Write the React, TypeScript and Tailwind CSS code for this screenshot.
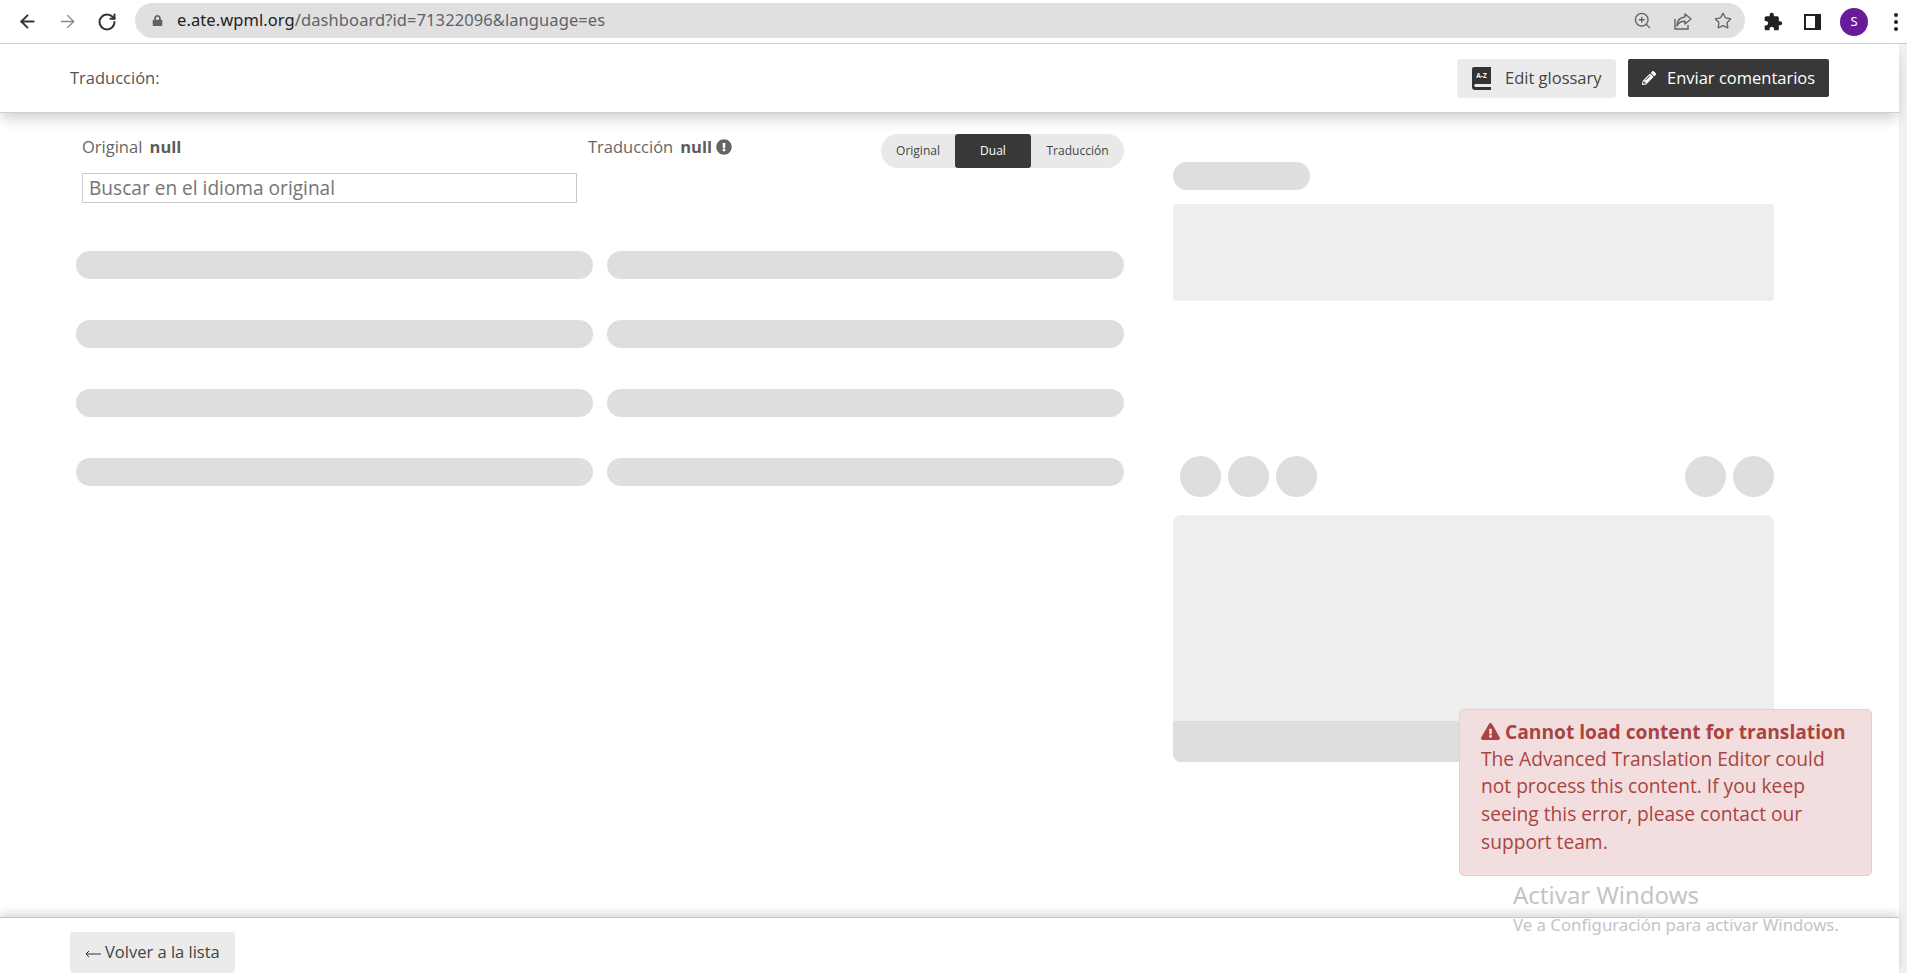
import React from 'react'
import { ArrowLeft, ArrowRight, RotateCw, ZoomIn, Star } from 'lucide-react'
import { FaPencilAlt, FaExclamationCircle, FaExclamationTriangle, FaLock } from 'react-icons/fa'

const rows = [0, 1, 2, 3]

const BrowserBar = () => (
  <div className="h-[44px] shrink-0 flex items-center border-b border-[#cfcfcf] bg-white font-['Noto_Sans',sans-serif]">
    <div className="w-[135px] shrink-0 flex items-center pl-[17px] gap-[19px] text-[#333]">
      <ArrowLeft size={21} strokeWidth={2.2} />
      <ArrowRight size={21} strokeWidth={1.6} className="text-[#8a8a8a]" />
      <RotateCw size={20} strokeWidth={2.4} />
    </div>
    <div className="w-[1610px] h-[35px] mb-[2px] shrink-0 rounded-full bg-[#e0e0e0] flex items-center pl-[17px] pr-[13px]">
      <FaLock size={11} className="text-[#5f6368]" />
      <div className="ml-[14px] flex-1 text-[16.500px] tracking-[0.08px] text-[#5f6368]">
        <span className="text-[#202124]">e.ate.wpml.org</span>/dashboard?id=71322096&amp;language=es
      </div>
      <div className="flex items-center gap-[21px] text-[#5f6368]">
        <ZoomIn size={19} strokeWidth={1.7} />
        <svg width="20" height="18" viewBox="0 0 20 18" fill="none" stroke="currentColor" strokeWidth="1.4">
          <path d="M2 7v10h13v-4" />
          <path d="M12 2l6 5-6 5V9.200C8 9 5.500 10.500 4 14c0-5 3-8.500 8-9z" strokeLinejoin="round" />
        </svg>
        <Star size={18} strokeWidth={1.8} />
      </div>
    </div>
    <div className="flex-1 flex items-center pl-[18px] text-[#202124]">
      <svg width="20" height="20" viewBox="0 0 24 24" fill="currentColor">
        <path d="M20.500 11H19V7c0-1.100-.9-2-2-2h-4V3.500C13 2.120 11.880 1 10.500 1S8 2.120 8 3.500V5H4c-1.100 0-1.990.9-1.990 2v3.800H3.500c1.490 0 2.700 1.210 2.700 2.700s-1.210 2.700-2.700 2.700H2V20c0 1.100.9 2 2 2h3.800v-1.500c0-1.490 1.210-2.700 2.700-2.700 1.490 0 2.700 1.210 2.700 2.700V22H17c1.100 0 2-.9 2-2v-4h1.500c1.380 0 2.500-1.120 2.500-2.500S21.880 11 20.500 11z" />
      </svg>
      <div className="ml-[21px] w-[17px] h-[16px] border-2 border-[#202124] border-r-[6px]" />
      <div className="ml-[19px] w-[28px] h-[28px] rounded-full bg-[#6a1b9a] text-white text-[13px] flex items-center justify-center">S</div>
      <div className="ml-[26px] flex flex-col gap-[3px]">
        <span className="w-[4px] h-[4px] rounded-full bg-[#202124]" />
        <span className="w-[4px] h-[4px] rounded-full bg-[#202124]" />
        <span className="w-[4px] h-[4px] rounded-full bg-[#202124]" />
      </div>
    </div>
  </div>
)

const GlossaryIcon = () => (
  <svg width="19" height="23" viewBox="0 0 19 23">
    <path d="M2 0h17v17H3a2 2 0 0 0 0 3h16v3H3a3 3 0 0 1-3-3V2a2 2 0 0 1 2-2z" fill="#333" />
    <text x="9.500" y="11" fontSize="6.500" fontWeight="700" fill="#fff" textAnchor="middle" fontFamily="'Open Sans',sans-serif">A-Z</text>
  </svg>
)

const Header = () => (
  <div className="relative z-10 h-[69px] shrink-0 flex items-center justify-between pl-[70px] pr-[70px] bg-white border-b border-[#cfcfcf] shadow-[0_8px_12px_-2px_rgba(0,0,0,0.18)]">
    <span className="text-[16.500px] text-[#555]">Traducción:</span>
    <div className="flex items-center gap-[12px]">
      <button className="w-[159px] h-[39px] rounded-[3px] bg-[#ebebeb] flex items-center pl-[15px] gap-[14px] text-[16.500px] text-[#444]">
        <GlossaryIcon />
        Edit glossary
      </button>
      <button className="w-[201px] h-[38px] rounded-[2px] bg-[#383838] flex items-center pl-[14px] gap-[11px] text-[16.500px] text-white">
        <FaPencilAlt size={14} />
        Enviar comentarios
      </button>
    </div>
  </div>
)

const ViewToggle = () => (
  <div className="w-[243px] h-[34px] rounded-full bg-[#e9e9e9] flex items-center text-[12px] text-[#444]">
    <span className="w-[74px] text-center">Original</span>
    <span className="w-[76px] h-full rounded-[3px] bg-[#383838] text-white flex items-center justify-center">Dual</span>
    <span className="flex-1 text-center">Traducción</span>
  </div>
)

const LeftPanel = () => (
  <div className="w-[1124px] shrink-0 pl-[76px] pt-[21px]">
    <div className="flex h-[117px]">
      <div className="w-[512px] pl-[6px] pt-[1px]">
        <div className="text-[16.500px] leading-[24px] text-[#666]">
          Original <b className="ml-[3px] font-bold text-[#5c5c5c]">null</b>
        </div>
        <input
          readOnly
          placeholder="Buscar en el idioma original"
          className="mt-[14px] w-[495px] h-[30px] border border-[#c8c8c8] px-[6px] text-[19.100px] placeholder:text-[#757575] outline-none"
        />
      </div>
      <div className="flex-1 flex justify-between items-start">
        <div className="pt-[1px] text-[16.500px] leading-[24px] text-[#666] flex items-center gap-[4px]">
          Traducción <b className="ml-[3px] font-bold text-[#5c5c5c]">null</b>
          <FaExclamationCircle size={16} className="text-[#666]" />
        </div>
        <ViewToggle />
      </div>
    </div>
    <div className="flex flex-col gap-[41px]">
      {rows.map((r) => (
        <div key={r} className="flex gap-[14px]">
          <div className="w-[517px] h-[28px] rounded-full bg-[#dedede]" />
          <div className="w-[517px] h-[28px] rounded-full bg-[#dedede]" />
        </div>
      ))}
    </div>
  </div>
)

const Circle = () => <div className="w-[41px] h-[41px] rounded-full bg-[#dedede]" />

const RightPanel = () => (
  <div className="ml-[49px] w-[601px] shrink-0 pt-[49px]">
    <div className="w-[137px] h-[28px] rounded-full bg-[#dedede]" />
    <div className="mt-[14px] h-[97px] rounded-[4px] bg-[#eeeeee]" />
    <div className="mt-[155px] flex justify-between pl-[7px]">
      <div className="flex gap-[7px]">
        <Circle />
        <Circle />
        <Circle />
      </div>
      <div className="flex gap-[7px]">
        <Circle />
        <Circle />
      </div>
    </div>
    <div className="mt-[18px] h-[247px] rounded-[8px] overflow-hidden bg-[#eeeeee] flex flex-col justify-end">
      <div className="h-[41px] bg-[#dedede]" />
    </div>
  </div>
)

const Footer = () => (
  <div className="relative h-[56px] shrink-0 flex pl-[70px] pt-[14px] bg-white border-t border-[#c4c4c4] shadow-[0_-4px_8px_rgba(0,0,0,0.14)]">
    <button className="w-[165px] h-[41px] rounded-[3px] bg-[#ebebeb] flex items-center pl-[15px] gap-[4px] text-[16.500px] text-[#444]">
      <svg width="16" height="8" viewBox="0 0 16 8" fill="none" stroke="#333" strokeWidth="1" className="mt-[3px]">
        <path d="M16 4H1M4 1L1 4l3 3" />
      </svg>
      Volver a la lista
    </button>
  </div>
)

export default function App() {
  return (
    <div className="relative h-[973px] w-full overflow-hidden bg-white font-['Open_Sans',sans-serif] flex flex-col">
      <BrowserBar />
      <div className="flex-1 flex min-h-0">
        <div className="flex-1 flex flex-col min-w-0">
          <Header />
          <div className="flex-1 flex min-h-0">
            <LeftPanel />
            <RightPanel />
          </div>
          <Footer />
        </div>
        <div className="w-[8px] shrink-0 bg-[#f1f1f1]" />
      </div>

      {/* error toast */}
      <div className="absolute left-[1459px] top-[709px] w-[413px] h-[167px] z-20 rounded-[5px] border border-[#ebccd1] bg-[#f2dede] pl-[21px] pr-[20px] pt-[8px] text-[19.200px] leading-[27.700px] text-[#a94442]">
        <div className="font-bold flex items-center gap-[5px]">
          <FaExclamationTriangle size={19} />
          Cannot load content for translation
        </div>
        <div className="-mt-[1px]">The Advanced Translation Editor could not process this content. If you keep seeing this error, please contact our support team.</div>
      </div>

      {/* windows watermark */}
      <div className="absolute left-[1513px] top-[878px] z-30 font-['Noto_Sans',sans-serif] text-[#c4c4c4] pointer-events-none">
        <div className="text-[24px] leading-[34px]">Activar Windows</div>
        <div className="text-[16.800px] leading-[22px] mt-[2px]">Ve a Configuración para activar Windows.</div>
      </div>
    </div>
  )
}
